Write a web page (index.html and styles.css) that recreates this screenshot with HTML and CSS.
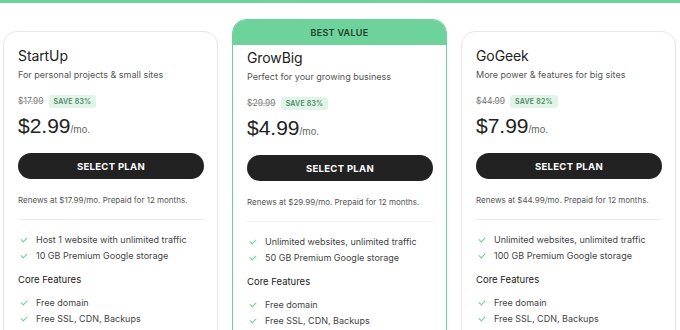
FILE: index.html
```html
<!DOCTYPE html>
<html lang="en">
<head>
    <meta charset="UTF-8" />
    <meta name="viewport" content="width=device-width, initial-scale=1" />
    <title>Hosting Plans</title>
    <link rel="stylesheet" href="styles.css">
</head>
<body>
    <div class="topline"></div>
    <main class="plans">
        <section class="plan">
            <div class="plan-body">
                <h2>StartUp</h2>
                <p class="tagline">For personal projects &amp; small sites</p>
                <div class="old-price"><s>$17.99</s><span class="save">SAVE 83%</span></div>
                <div class="price">$2.99<span>/mo.</span></div>
                <button>SELECT PLAN</button>
                <p class="renews">Renews at $17.99/mo. Prepaid for 12 months.</p>
                <hr>
                <ul class="features">
                    <li>Host 1 website with unlimited traffic</li>
                    <li>10 GB Premium Google storage</li>
                </ul>
                <h3>Core Features</h3>
                <ul class="features">
                    <li>Free domain</li>
                    <li>Free SSL, CDN, Backups</li>
                </ul>
            </div>
        </section>
        <section class="plan featured">
            <div class="badge">BEST VALUE</div>
            <div class="plan-body">
                <h2>GrowBig</h2>
                <p class="tagline">Perfect for your growing business</p>
                <div class="old-price"><s>$29.99</s><span class="save">SAVE 83%</span></div>
                <div class="price">$4.99<span>/mo.</span></div>
                <button>SELECT PLAN</button>
                <p class="renews">Renews at $29.99/mo. Prepaid for 12 months.</p>
                <hr>
                <ul class="features">
                    <li>Unlimited websites, unlimited traffic</li>
                    <li>50 GB Premium Google storage</li>
                </ul>
                <h3>Core Features</h3>
                <ul class="features">
                    <li>Free domain</li>
                    <li>Free SSL, CDN, Backups</li>
                </ul>
            </div>
        </section>
        <section class="plan">
            <div class="plan-body">
                <h2>GoGeek</h2>
                <p class="tagline">More power &amp; features for big sites</p>
                <div class="old-price"><s>$44.99</s><span class="save">SAVE 82%</span></div>
                <div class="price">$7.99<span>/mo.</span></div>
                <button>SELECT PLAN</button>
                <p class="renews">Renews at $44.99/mo. Prepaid for 12 months.</p>
                <hr>
                <ul class="features">
                    <li>Unlimited websites, unlimited traffic</li>
                    <li>100 GB Premium Google storage</li>
                </ul>
                <h3>Core Features</h3>
                <ul class="features">
                    <li>Free domain</li>
                    <li>Free SSL, CDN, Backups</li>
                </ul>
            </div>
        </section>
    </main>
</body>
</html>
```

FILE: styles.css
```css
/* Base */
* {
    box-sizing: border-box;
}
body {
    font-family: 'Inter', 'Liberation Sans', sans-serif;
    margin: 0;
    background: #fff;
    color: #333;
    height: 330px;
    overflow: hidden;
}
.topline {
    height: 3px;
    background: #6dd39a;
}
.plans {
    display: flex;
    align-items: flex-start;
    gap: 14px;
    padding: 16px 0 0 3px;
    height: 327px;
    overflow: hidden;
}
.plan {
    width: 215px;
    height: 340px;
    margin-top: 12px;
    border: 1px solid #e8e8e8;
    border-radius: 14px;
    overflow: hidden;
}
.plan-body {
    padding: 14px 13px 0 14px;
}
.plan.featured {
    margin-top: 0;
    border: 1px solid #6dd39a;
}
.plan.featured .plan-body {
    padding-top: 3px;
}
.badge {
    height: 25px;
    line-height: 26px;
    background: #6dd39a;
    text-align: center;
    font-size: 9px;
    font-weight: 600;
    letter-spacing: 0.3px;
    color: #1e3a2a;
}
.plan h2 {
    margin: 0;
    font-size: 14px;
    line-height: 20px;
    font-weight: 400;
    letter-spacing: -0.1px;
    color: #222;
}
.tagline {
    margin: 1px 0 0;
    font-size: 9px;
    line-height: 16px;
    color: #555;
}
.old-price {
    display: flex;
    align-items: center;
    gap: 5px;
    height: 12px;
    margin-top: 12px;
    font-size: 8.5px;
    color: #777;
}
.old-price s {
    text-decoration-color: #bbb;
}
.save {
    background: #e1f4e8;
    color: #4a8964;
    font-weight: 600;
    font-size: 7px;
    padding: 2px 5px;
    border-radius: 3px;
    letter-spacing: 0.2px;
}
.price {
    margin-top: 6px;
    font-family: 'Liberation Sans', Arial, sans-serif;
    font-size: 21px;
    line-height: 26px;
    color: #222;
}
.price span {
    font-size: 10px;
    color: #666;
}
button {
    display: block;
    width: 100%;
    height: 26px;
    margin-top: 10px;
    background: #222;
    border: none;
    border-radius: 13px;
    color: #fff;
    font-family: 'Inter', sans-serif;
    font-size: 9.5px;
    font-weight: 700;
    letter-spacing: 0.3px;
    cursor: pointer;
}
.renews {
    margin: 15px 0 0;
    font-size: 8px;
    line-height: 12px;
    color: #555;
}
hr {
    margin: 13px 0 0;
    border: none;
    border-top: 1px solid #eee;
}
.features {
    list-style: none;
    margin: 12px 0 0;
    padding: 0;
}
.features li {
    position: relative;
    padding-left: 18px;
    font-size: 9px;
    line-height: 16px;
    color: #444;
}
.features li::before {
    content: "";
    position: absolute;
    left: 3px;
    top: 5px;
    width: 5px;
    height: 3px;
    border-left: 1.2px solid #6bcf94;
    border-bottom: 1.2px solid #6bcf94;
    transform: rotate(-45deg);
}
.plan h3 {
    margin: 8px 0 0;
    font-size: 9.5px;
    line-height: 16px;
    font-weight: 400;
    color: #222;
}
h3 + .features {
    margin-top: 7px;
}
```
